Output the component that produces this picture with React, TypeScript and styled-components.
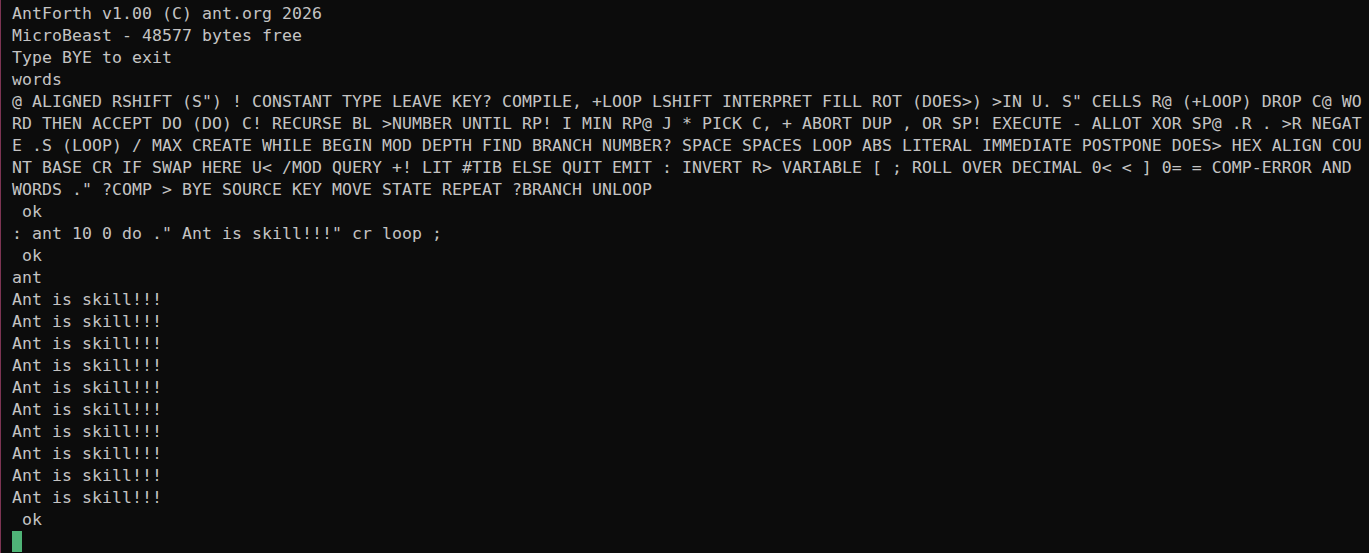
import React from "react";
import styled, { createGlobalStyle } from "styled-components";

const Global = createGlobalStyle`
  html, body {
    margin: 0;
    padding: 0;
    background: #0c0c0c;
    overflow: hidden;
  }
`;

const Terminal = styled.div`
  box-sizing: border-box;
  height: 100vh;
  background: #0c0c0c;
  border-left: 1px solid #7d3553;
  padding: 2px 0 0 11px;
  color: #c4c4c4;
  font-family: "DejaVu Sans Mono", "Liberation Mono", monospace;
  font-size: 16.5px;
  letter-spacing: 0.065px;
  display: flex;
  flex-direction: column;
`;

const Line = styled.div`
  box-sizing: border-box;
  white-space: pre;
  height: 22px;
  padding-top: 1px;
  line-height: 22px;
`;

const CursorLine = styled.div`
  height: 22px;
  display: flex;
  align-items: flex-start;
`;

const Cursor = styled.span`
  display: block;
  width: 10px;
  height: 21px;
  margin-top: 1px;
  background: #4fb477;
`;

const lines: string[] = [
  "AntForth v1.00 (C) ant.org 2026",
  "MicroBeast - 48577 bytes free",
  "Type BYE to exit",
  "words",
  "@ ALIGNED RSHIFT (S\") ! CONSTANT TYPE LEAVE KEY? COMPILE, +LOOP LSHIFT INTERPRET FILL ROT (DOES>) >IN U. S\" CELLS R@ (+LOOP) DROP C@ WO",
  "RD THEN ACCEPT DO (DO) C! RECURSE BL >NUMBER UNTIL RP! I MIN RP@ J * PICK C, + ABORT DUP , OR SP! EXECUTE - ALLOT XOR SP@ .R . >R NEGAT",
  "E .S (LOOP) / MAX CREATE WHILE BEGIN MOD DEPTH FIND BRANCH NUMBER? SPACE SPACES LOOP ABS LITERAL IMMEDIATE POSTPONE DOES> HEX ALIGN COU",
  "NT BASE CR IF SWAP HERE U< /MOD QUERY +! LIT #TIB ELSE QUIT EMIT : INVERT R> VARIABLE [ ; ROLL OVER DECIMAL 0< < ] 0= = COMP-ERROR AND ",
  "WORDS .\" ?COMP > BYE SOURCE KEY MOVE STATE REPEAT ?BRANCH UNLOOP",
  " ok",
  ": ant 10 0 do .\" Ant is skill!!!\" cr loop ;",
  " ok",
  "ant",
  ...Array.from({ length: 10 }, () => "Ant is skill!!!"),
  " ok",
];

export default function App() {
  return (
    <>
      <Global />
      <Terminal>
        {lines.map((l, i) => (
          <Line key={i}>{l}</Line>
        ))}
        <CursorLine>
          <Cursor />
        </CursorLine>
      </Terminal>
    </>
  );
}
